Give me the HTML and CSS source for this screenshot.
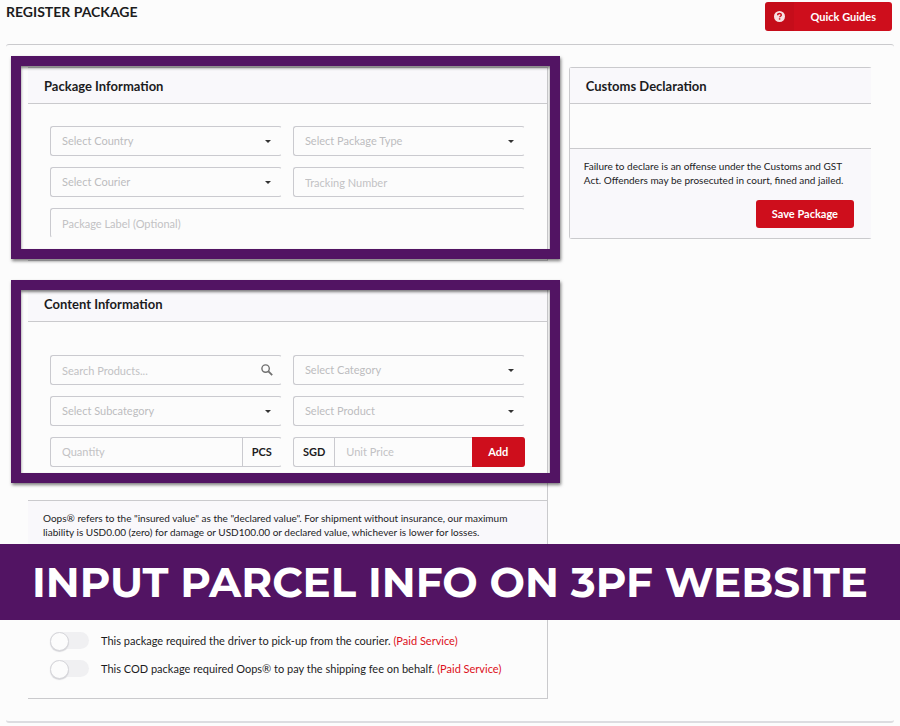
FILE: index.html
```html
<!DOCTYPE html>
<html lang="en">

<head>
  <meta charset="UTF-8">
  <meta name="viewport" content="width=device-width, initial-scale=1.0">
  <title>Register Package</title>
  <link rel="stylesheet" href="styles.css">
</head>

<body>
  <header class="top">
    <h1>REGISTER PACKAGE</h1>
    <button type="button" class="btn btn-guide">
      <span class="btn-icon">
        <svg viewBox="0 0 12 12" width="11" height="11" aria-hidden="true">
          <circle cx="6" cy="6" r="6" fill="#fff" />
          <path d="M4 4.6C4 3.2 5 2.7 6 2.7s2 .7 2 1.7c0 1.3-1.8 1.3-1.8 2.5" fill="none" stroke="#ce0e1c" stroke-width="1.5" />
          <rect x="5.3" y="7.9" width="1.6" height="1.5" fill="#ce0e1c" />
        </svg>
      </span>
      <span class="btn-text">Quick Guides</span>
    </button>
  </header>

  <main class="main">
    <form class="left">
      <!-- package -->
      <section class="panel marked">
        <h2>Package Information</h2>
        <div class="fields">
          <div class="select">
            <select aria-label="Country"><option>Select Country</option></select>
          </div>
          <div class="select">
            <select aria-label="Package type"><option>Select Package Type</option></select>
          </div>
          <div class="select">
            <select aria-label="Courier"><option>Select Courier</option></select>
          </div>
          <input class="input" type="text" aria-label="Tracking number" placeholder="Tracking Number">
          <input class="input input-label" type="text" aria-label="Package label" placeholder="Package Label (Optional)">
        </div>
      </section>

      <!-- content -->
      <section class="panel">
        <div class="marked marked-content">
          <h2>Content Information</h2>
          <div class="fields fields-content">
            <div class="search">
              <input class="input" type="text" aria-label="Search products" placeholder="Search Products...">
              <svg class="search-icon" viewBox="0 0 12 12" width="12" height="12" aria-hidden="true">
                <circle cx="4.6" cy="4.6" r="3.7" fill="none" stroke="#707070" stroke-width="1.4" />
                <path d="M7.4 7.4L11.2 11.2" stroke="#707070" stroke-width="1.8" />
              </svg>
            </div>
            <div class="select">
              <select aria-label="Category"><option>Select Category</option></select>
            </div>
            <div class="select">
              <select aria-label="Subcategory"><option>Select Subcategory</option></select>
            </div>
            <div class="select">
              <select aria-label="Product"><option>Select Product</option></select>
            </div>
            <div class="group">
              <input type="text" id="qty" placeholder="Quantity">
              <label class="unit" for="qty">PCS</label>
            </div>
            <div class="group">
              <label class="currency" for="price">SGD</label>
              <input type="text" id="price" placeholder="Unit Price">
              <button type="button" class="btn btn-add">Add</button>
            </div>
          </div>
        </div>
        <p class="note">Oops® refers to the "insured value" as the "declared value". For shipment without insurance, our maximum liability is USD0.00 (zero) for damage or USD100.00 or declared value, whichever is lower for losses.</p>
        <div class="options">
          <label class="option">
            <input type="checkbox">
            <span>This package required the driver to pick-up from the courier. <em>(Paid Service)</em></span>
          </label>
          <label class="option">
            <input type="checkbox">
            <span>This COD package required Oops® to pay the shipping fee on behalf. <em>(Paid Service)</em></span>
          </label>
        </div>
      </section>
    </form>

    <aside class="customs">
      <h2>Customs Declaration</h2>
      <div class="customs-body"></div>
      <div class="customs-foot">
        <p>Failure to declare is an offense under the Customs and GST Act. Offenders may be prosecuted in court, fined and jailed.</p>
        <button type="button" class="btn btn-save">Save Package</button>
      </div>
    </aside>
  </main>

  <div class="banner">INPUT PARCEL INFO ON 3PF WEBSITE</div>
</body>

</html>
```

FILE: styles.css
```css
* {
  box-sizing: border-box;
  margin: 0;
  padding: 0;
}

body {
  position: relative;
  background: #fcfcfc;
  color: #1c1c1e;
  font: 11px/14px Lato, "Open Sans", sans-serif;
}

input,
select,
button {
  font: inherit;
}

/* header */
.top {
  display: flex;
  justify-content: space-between;
  align-items: flex-start;
  padding: 2px 8px 13px 6px;
}

h1 {
  font-size: 14px;
  line-height: 20px;
  font-weight: 700;
}

h2 {
  height: 36px;
  padding: 0 16px;
  border-bottom: 1px solid #cacacd;
  background: #f9f8fb;
  font-size: 13px;
  line-height: 37px;
  font-weight: 700;
}

.btn {
  border: 0;
  border-radius: 3px;
  background: #ce0e1c;
  color: #fff;
  font-weight: 700;
  cursor: pointer;
}

.btn-guide {
  display: flex;
  height: 29px;
  overflow: hidden;
}

.btn-icon {
  display: flex;
  align-items: center;
  justify-content: center;
  width: 29px;
  height: 29px;
  background: rgba(0, 0, 0, .04);
}

.btn-icon svg {
  opacity: .88;
}

.btn-text {
  padding: 0 16px;
  line-height: 29px;
}

/* layout */
.main {
  display: grid;
  grid-template-columns: 12fr 7fr;
  gap: 21px;
  align-items: start;
  margin: 0 6px;
  padding: 22px 22px 22px;
  border-top: 1px solid #cacacd;
  border-bottom: 2px solid #dcdce0;
  border-radius: 3px;
}

.left {
  display: grid;
  gap: 24px;
}

.panel {
  border: 1px solid #cacacd;
  border-left: 0;
}

/* purple frame round a block */
.marked {
  position: relative;
}

.marked::after {
  content: "";
  position: absolute;
  inset: -12px -13px 1px -17px;
  border: 10px solid #521463;
  box-shadow: 1px 2px 3px rgba(0, 0, 0, .5), inset 0 2px 3px rgba(0, 0, 0, .5);
  pointer-events: none;
}

.marked-content::after {
  inset: -6px -13px -16px -17px;
}

/* fields */
.fields {
  display: grid;
  grid-template-columns: repeat(2, minmax(0, 1fr));
  gap: 11px;
  padding: 22px;
}

.fields-content {
  padding: 33px 22px 0;
}

.input,
.select select,
.group {
  width: 100%;
  height: 30px;
  border: 1px solid #cacacf;
  border-right-color: transparent;
  border-radius: 3px;
  background: transparent;
}

.input,
.select select,
.group input {
  padding: 0 11px;
  color: #bdbdbf;
  outline: 0;
}

.input::placeholder,
.group input::placeholder {
  color: #c2c2c4;
}

.input-label {
  grid-column: 1 / 3;
  border-bottom-color: transparent;
}

.select,
.search {
  position: relative;
}

.select select {
  display: block;
  appearance: none;
}

.select::after {
  content: "";
  position: absolute;
  top: 14px;
  right: 11px;
  border: 3px solid transparent;
  border-top-color: #333;
  border-bottom: 0;
  pointer-events: none;
}

.search-icon {
  position: absolute;
  top: 9px;
  right: 9px;
}

.group {
  display: flex;
}

.group input {
  flex: 1;
  min-width: 0;
  border: 0;
  background: none;
}

.unit,
.currency {
  padding: 0 9px;
  line-height: 28px;
  font-weight: 700;
}

.unit {
  border-left: 1px solid #cacacf;
}

.currency {
  border-right: 1px solid #cacacf;
}

.btn-add {
  width: 53px;
  margin: -1px;
  border-radius: 0 3px 3px 0;
}

/* liability note */
.note {
  margin-top: 33px;
  padding: 10px 15px;
  border-top: 1px solid #cacacd;
  background: #f9f8fb;
  font-size: 10px;
}

.options {
  display: grid;
  gap: 11px;
  padding: 83px 22px 21px;
}

.option {
  display: flex;
  align-items: center;
  gap: 12px;
}

.option em {
  color: #dc1021;
  font-style: normal;
}

.option input {
  appearance: none;
  width: 39px;
  height: 17px;
  border-radius: 9px;
  background: #f0f0f2;
}

.option input::before {
  content: "";
  display: block;
  width: 17px;
  height: 17px;
  border: 1px solid #d6d6da;
  border-radius: 50%;
  background: #fcfcfc;
  box-shadow: 0 1px 1px #d6d6da;
}

.option input:checked::before {
  margin-left: 22px;
}

/* customs */
.customs {
  border: 1px solid #cacacd;
  border-right-color: transparent;
  border-radius: 3px;
}

.customs-body {
  height: 44px;
}

.customs-foot {
  padding: 10px 17px 10px 14px;
  border-top: 1px solid #cacacd;
  background: #f9f8fb;
  font-size: 10px;
}

.btn-save {
  display: block;
  height: 28px;
  margin: 13px 0 0 auto;
  padding: 0 16px;
  font-size: 11px;
}

/* caption over the page */
.banner {
  position: absolute;
  top: 544px;
  left: 0;
  right: 0;
  background: #521463;
  color: #fff;
  font: 700 42px/76px Montserrat, Inter, sans-serif;
  text-align: center;
  white-space: nowrap;
}
```
